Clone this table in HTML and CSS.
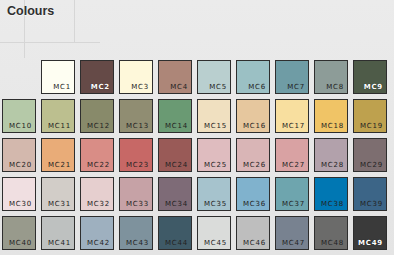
FILE: index.html
```html
<!DOCTYPE html>
<html>
<head>
<meta charset="utf-8">
<link rel="stylesheet" href="styles.css">
</head>
<body>
<div class="page">
  <h2 class="title">Colours</h2>
  <div class="grid">
    <div class="empty"></div>
    <div class="sw" style="background:#fefef2">MC1</div>
    <div class="sw light" style="background:#654a47">MC2</div>
    <div class="sw" style="background:#fef8da">MC3</div>
    <div class="sw" style="background:#ad8678">MC4</div>
    <div class="sw" style="background:#b9cfcf">MC5</div>
    <div class="sw" style="background:#9bc0c4">MC6</div>
    <div class="sw" style="background:#6f9ca5">MC7</div>
    <div class="sw" style="background:#8d9c98">MC8</div>
    <div class="sw light" style="background:#4e5b48">MC9</div>

    <div class="sw" style="background:#b5c9a8">MC10</div>
    <div class="sw" style="background:#bcbf8f">MC11</div>
    <div class="sw" style="background:#888a6a">MC12</div>
    <div class="sw" style="background:#908d72">MC13</div>
    <div class="sw" style="background:#6a9a73">MC14</div>
    <div class="sw" style="background:#f0e0c0">MC15</div>
    <div class="sw" style="background:#e6c79e">MC16</div>
    <div class="sw" style="background:#f8df9f">MC17</div>
    <div class="sw" style="background:#f0c466">MC18</div>
    <div class="sw" style="background:#bea14e">MC19</div>

    <div class="sw" style="background:#d3b8ad">MC20</div>
    <div class="sw" style="background:#e9ac78">MC21</div>
    <div class="sw" style="background:#d98d86">MC22</div>
    <div class="sw" style="background:#c76866">MC23</div>
    <div class="sw" style="background:#995a57">MC24</div>
    <div class="sw" style="background:#dfbcbf">MC25</div>
    <div class="sw" style="background:#d9b5b6">MC26</div>
    <div class="sw" style="background:#d9a2a3">MC27</div>
    <div class="sw" style="background:#b2a1ab">MC28</div>
    <div class="sw" style="background:#7d6e70">MC29</div>

    <div class="sw" style="background:#f0dfe1">MC30</div>
    <div class="sw" style="background:#d2cdc8">MC31</div>
    <div class="sw" style="background:#e6cfcf">MC32</div>
    <div class="sw" style="background:#c6a2a6">MC33</div>
    <div class="sw" style="background:#7e6b77">MC34</div>
    <div class="sw" style="background:#a6c3cd">MC35</div>
    <div class="sw" style="background:#80b2cd">MC36</div>
    <div class="sw" style="background:#6ea5ae">MC37</div>
    <div class="sw" style="background:#0077b3">MC38</div>
    <div class="sw" style="background:#3c6587">MC39</div>

    <div class="sw" style="background:#989a8c">MC40</div>
    <div class="sw" style="background:#bec1c0">MC41</div>
    <div class="sw" style="background:#9eb0bf">MC42</div>
    <div class="sw" style="background:#7e929d">MC43</div>
    <div class="sw" style="background:#3f5a67">MC44</div>
    <div class="sw" style="background:#dadcda">MC45</div>
    <div class="sw" style="background:#bebebe">MC46</div>
    <div class="sw" style="background:#788290">MC47</div>
    <div class="sw" style="background:#6b6b6a">MC48</div>
    <div class="sw light" style="background:#3a3a3a">MC49</div>
  </div>
</div>
</body>
</html>
```

FILE: styles.css
```css
html, body {
  margin: 0;
  padding: 0;
}
body {
  width: 394px;
  height: 255px;
  overflow: hidden;
  background-color: #e7e7e7;
  background-image:
    linear-gradient(#d6d6d6, #d6d6d6),
    linear-gradient(#d6d6d6, #d6d6d6),
    linear-gradient(#d6d6d6, #d6d6d6),
    linear-gradient(#ebebeb, #e4e4e4);
  background-size: 1px 58px, 1px 42px, 100px 1px, 100% 100%;
  background-position: 24px 0, 74px 0, 0 42px, 0 0;
  background-repeat: no-repeat;
  font-family: "Liberation Sans", Arial, sans-serif;
}
.page {
  padding: 5px 0 0 2px;
}
.title {
  margin: 0 0 0 5px;
  font-size: 12.5px;
  line-height: 13px;
  font-weight: bold;
  color: #2f2f2f;
  text-shadow: 0 1px 0 rgba(255,255,255,0.6);
}
.grid {
  margin-top: 42px;
  display: grid;
  grid-template-columns: repeat(10, 34px);
  grid-auto-rows: 34px;
  column-gap: 5px;
  row-gap: 5px;
}
.sw {
  box-sizing: border-box;
  border: 1px solid #2e2e2e;
  display: flex;
  align-items: flex-end;
  justify-content: flex-end;
  padding: 0 3px 2px 0;
  font-family: "DejaVu Sans", sans-serif;
  font-size: 7px;
  letter-spacing: 0.8px;
  line-height: 8px;
  color: #222222;
}
.sw.light {
  color: #ffffff;
  font-weight: bold;
  text-shadow: 0 0 1px rgba(0,0,0,0.6);
}
```
